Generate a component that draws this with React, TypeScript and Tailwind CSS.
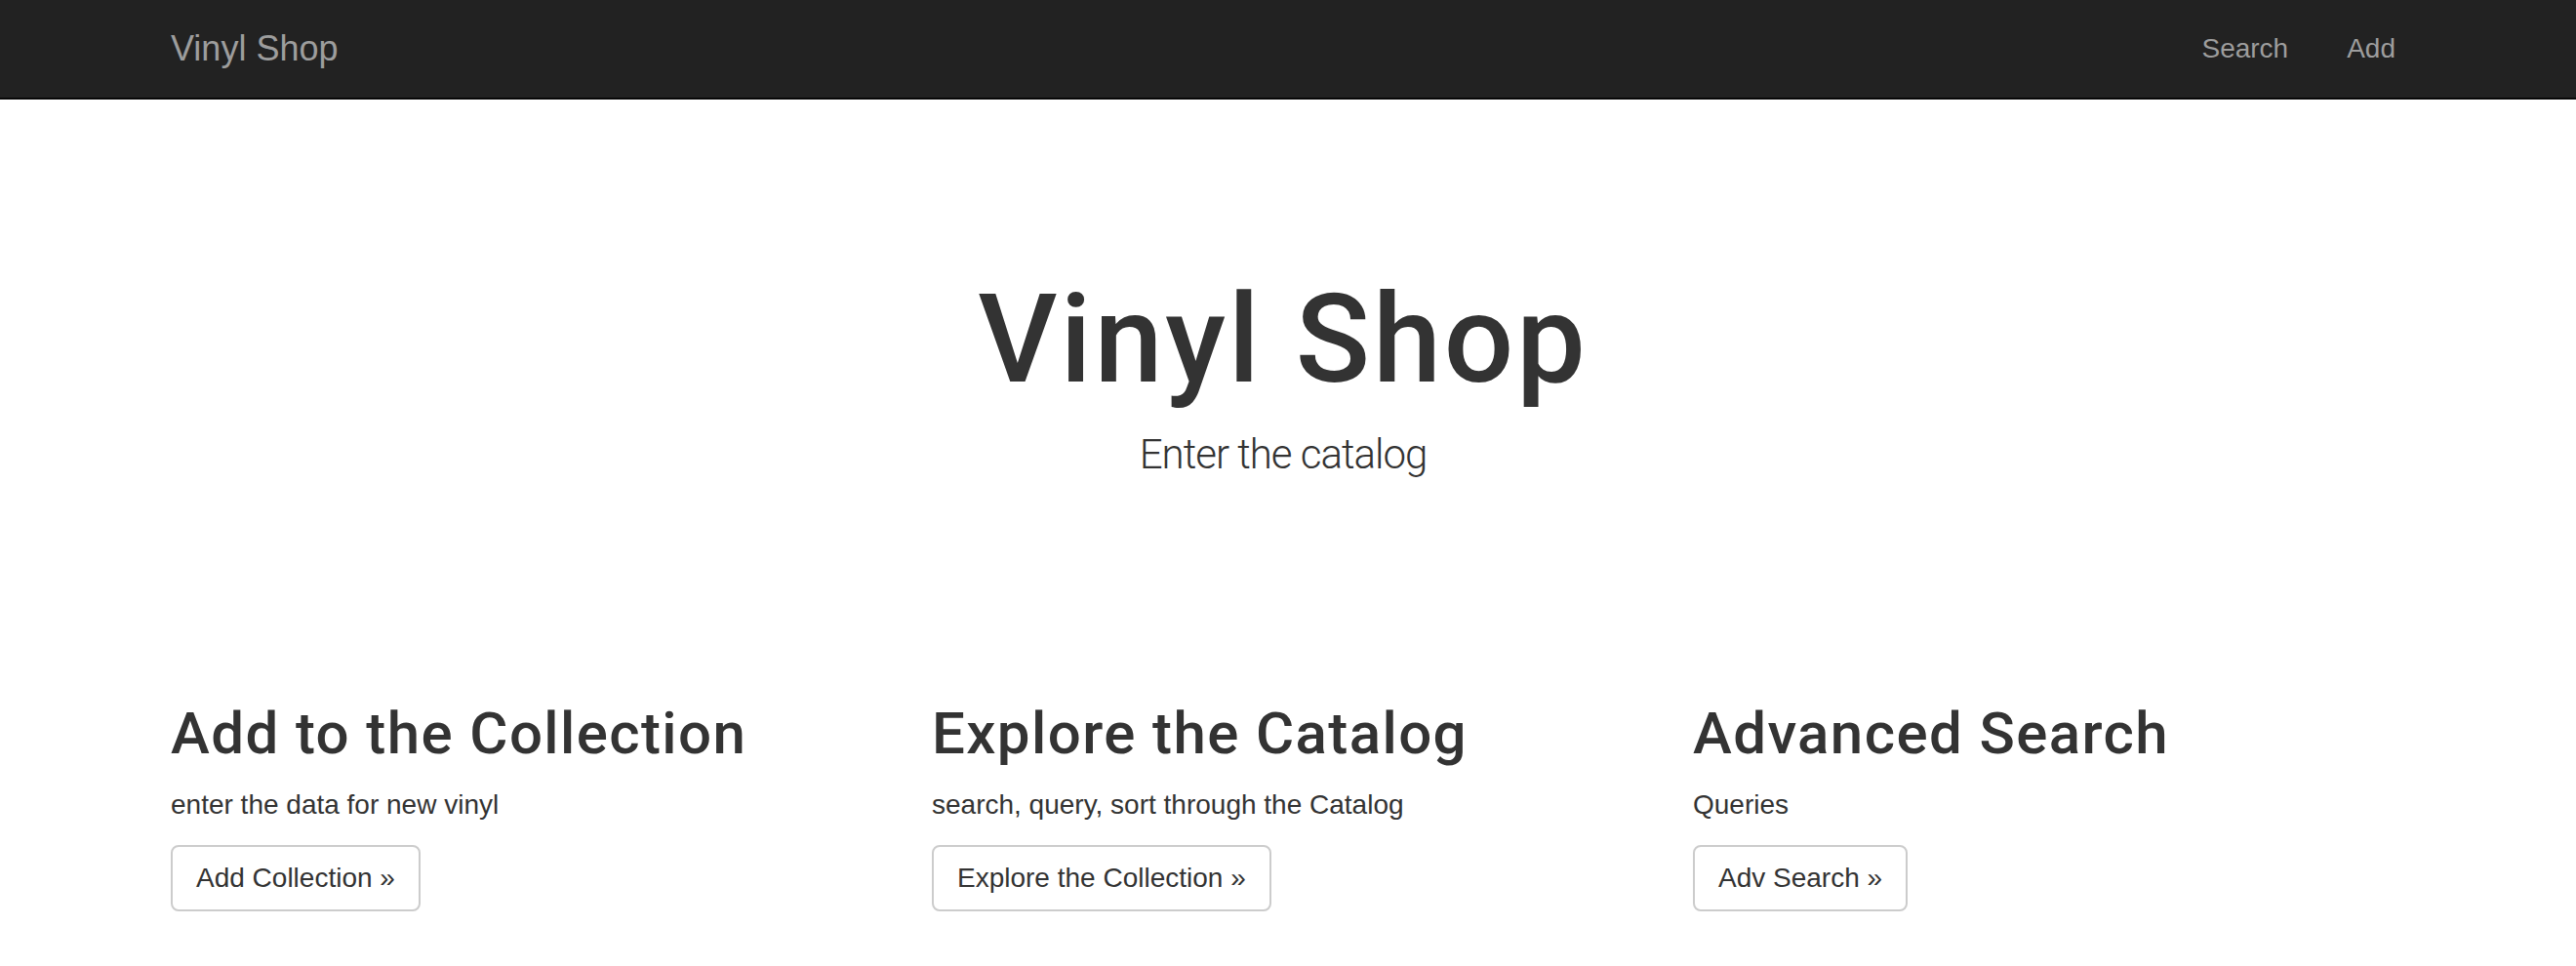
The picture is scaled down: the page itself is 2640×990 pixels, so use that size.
const features = [
  { title: "Add to the Collection", text: "enter the data for new vinyl", action: "Add Collection" },
  { title: "Explore the Catalog", text: "search, query, sort through the Catalog", action: "Explore the Collection" },
  { title: "Advanced Search", text: "Queries", action: "Adv Search" },
]

function Navbar() {
  return (
    <nav className="h-[102px] bg-[#222] border-b-2 border-[#080808]">
      <div className="ml-[145px] w-[2340px] h-[100px] px-[30px] flex items-center">
        <a href="#" className="text-[36px] leading-[40px] text-[#9d9d9d]">Vinyl Shop</a>
        <ul className="ml-auto -mr-[30px] flex">
          <li>
            <a href="#" className="block px-[30px] text-[28px] leading-[40px] text-[#9d9d9d]">Search</a>
          </li>
          <li>
            <a href="#" className="block px-[30px] text-[28px] leading-[40px] text-[#9d9d9d]">Add</a>
          </li>
        </ul>
      </div>
    </nav>
  )
}

export default function App() {
  return (
    <div className="min-h-screen bg-white text-[#333] font-['Liberation_Sans',Arial,sans-serif]">
      <Navbar />

      <div className="ml-[145px] w-[2340px] px-[30px] pt-[177px] text-center">
        <h1 className="font-['Roboto',sans-serif] text-[126px] leading-[138px] font-medium tracking-[2.8px]">Vinyl Shop</h1>
        <p className="mt-[19px] font-['Roboto',sans-serif] font-light text-[42px] leading-[60px] tracking-[-1px]">Enter the catalog</p>
      </div>

      <div className="ml-[145px] w-[2340px] pt-[223px] grid grid-cols-3">
        {features.map((f) => (
          <div key={f.title} className="px-[30px]">
            <h2 className="font-['Roboto',sans-serif] text-[60px] leading-[66px] font-medium tracking-[1.4px]">{f.title}</h2>
            <p className="mt-[20px] text-[28px] leading-[40px]">{f.text}</p>
            <a
              href="#"
              className="mt-[21px] inline-block border-2 border-[#ccc] rounded-[8px] px-[24px] py-[12px] text-[28px] leading-[40px] text-[#333]"
            >
              {f.action} &raquo;
            </a>
          </div>
        ))}
      </div>
    </div>
  )
}
